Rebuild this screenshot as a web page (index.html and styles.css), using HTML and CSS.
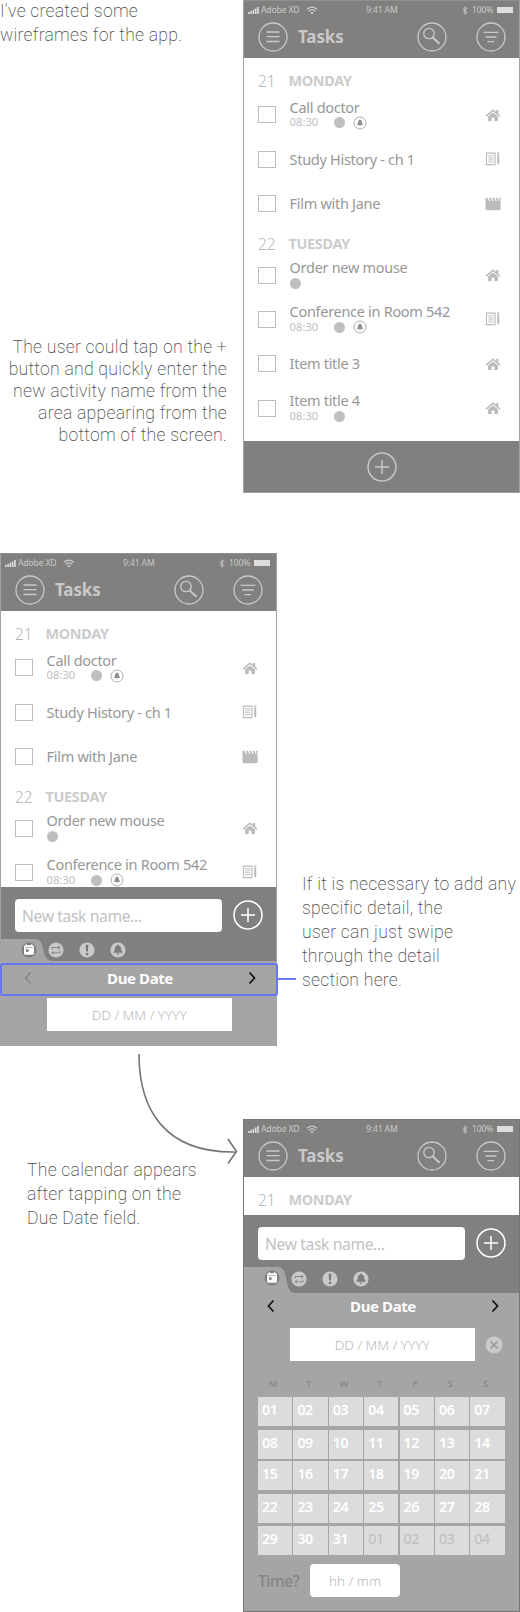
FILE: index.html
```html
<!DOCTYPE html>
<html lang="en">
<head>
<meta charset="utf-8">
<title>Tasks wireframes</title>
<link rel="stylesheet" href="styles.css">
</head>
<body>
<svg class="defs" width="0" height="0" aria-hidden="true">
  <symbol id="signal" viewBox="0 0 11 7"><path d="M0 5h1.6v2H0zM2.3 4h1.6v3H2.3zM4.6 2.8h1.6V7H4.6zM6.9 1.5h1.6V7H6.9zM9.2 0h1.6v7H9.2z" fill="currentColor"/></symbol>
  <symbol id="wifi" viewBox="0 0 12 9"><path d="M1 3.2Q6-1 11 3.2M2.8 5.2Q6 2.6 9.2 5.2" fill="none" stroke="currentColor" stroke-width="1.3"/><path d="M4.2 6.6Q6 5.4 7.800 6.600L6 8.500z" fill="currentColor"/></symbol>
  <symbol id="bluetooth" viewBox="0 0 6 9"><path d="M.8 2.500l4 4L3 8.300V.7l1.800 1.800-4 4" fill="none" stroke="currentColor" stroke-width="1"/></symbol>
  <symbol id="menu" viewBox="0 0 30 30"><g fill="none" stroke="currentColor" stroke-width="1.300"><circle cx="15" cy="15" r="14"/><path d="M8.500 10h13M8.500 14.700h13M8.500 19.500h13"/></g></symbol>
  <symbol id="search" viewBox="0 0 30 30"><g fill="none" stroke="currentColor" stroke-width="1.300"><circle cx="15" cy="15" r="14"/><circle cx="12" cy="11.500" r="5.200"/><path d="M15.800 15.500l6.700 6.300" stroke-width="2"/></g></symbol>
  <symbol id="filter" viewBox="0 0 30 30"><g fill="none" stroke="currentColor" stroke-width="1.300"><circle cx="15" cy="15" r="14"/><path d="M7.500 10.300h15M9.500 15h11M11.500 19.600h6.500"/></g></symbol>
  <symbol id="plus" viewBox="0 0 30 30"><g fill="none" stroke="currentColor" stroke-width="1.500"><circle cx="15" cy="15" r="14"/><path d="M8 15h14M15 8v14"/></g></symbol>
  <symbol id="home" viewBox="0 0 16 14"><path d="M8 1.200L.6 7.600l1 1.100L8 3.300l6.400 5.400 1-1.100-2.100-1.900V1.700h-2v2.200z" fill="currentColor"/><path d="M8 4.500l-4.900 4.100V13h3.500V9.500h2.800V13h3.500V8.600z" fill="currentColor"/></symbol>
  <symbol id="notes" viewBox="0 0 16 15"><path d="M1 1.200h9.200v12.300H1z" fill="none" stroke="currentColor" stroke-width="1.200"/><path d="M3 4h5.500M3 6.200h5.500M3 8.400h5.500M3 10.600h5.500" stroke="currentColor" stroke-width="1"/><path d="M12.500 .6h2.200v2h-2.200zM12.500 3.300h2.200v8l-1.100 3-1.100-3z" fill="currentColor"/></symbol>
  <symbol id="film" viewBox="0 0 17 14"><path d="M.5 .7L2.700.3 4.200 3.900h1.200L4.100.3h2L7.600 3.900h1.300L7.600.3h2l1.500 3.600h1.300L11.100.3h2l1.500 3.600h.9L14.600.3h2V12q0 1.700-1.700 1.700H2.200Q.5 13.700.5 12z" fill="currentColor"/></symbol>
  <symbol id="bellring" viewBox="0 0 14 14"><circle cx="7" cy="7" r="6" fill="none" stroke="currentColor" stroke-width="1"/><path d="M7 3.400Q5 4 5 6.500L4 9h6L9 6.500Q9 4 7 3.400zM6.200 9.400h1.600L7 10.400z" fill="#8e8e8e"/></symbol>
  <symbol id="calendar" viewBox="0 0 16 16"><circle cx="8" cy="8" r="7.500" fill="#7f7e7d"/><path d="M4.600 3.300V2.200h1.500v1.100h3.800V2.200h1.500v1.100q1.600 0 1.600 1.500v6.500q0 1.500-1.500 1.500h-7Q3 12.800 3 11.300V4.800q0-1.500 1.600-1.500z" fill="#fff"/><path d="M4.200 5.600h7.600" stroke="#8a8a8a" stroke-width=".7"/><path d="M5 7.300h2.600v2.500H5z" fill="#777"/></symbol>
  <symbol id="repeat" viewBox="0 0 16 16"><circle cx="8" cy="8" r="7.600" fill="#c9c9c9"/><path d="M4 7.600V5.500h6.800M12 8.400v2.300H5.200" fill="none" stroke="#8a8a8a" stroke-width="1.100"/><path d="M10.200 3.500l2.600 2-2.600 2zM5.800 8.700l-2.600 2 2.600 2z" fill="#8a8a8a"/></symbol>
  <symbol id="alert" viewBox="0 0 16 16"><circle cx="8" cy="8" r="7.600" fill="#c9c9c9"/><path d="M6.700 2.700h2.600L8.900 9.500H7.100z" fill="#777"/><circle cx="8" cy="12" r="1.300" fill="#777"/></symbol>
  <symbol id="bell" viewBox="0 0 16 16"><circle cx="8" cy="8" r="7.600" fill="#c9c9c9"/><path d="M8 2.600q-.8 0-.9 1Q4.700 4.300 4.700 8L3.200 10.800h9.600L11.300 8q0-3.700-2.400-4.400-.1-1-.9-1zM6.500 11.500h3q-.3 1.300-1.500 1.300t-1.500-1.300z" fill="#7c7c7c"/></symbol>
  <symbol id="left" viewBox="0 0 10 14"><path d="M7.500 1.500L2.500 7l5 5.500" fill="none" stroke="currentColor" stroke-width="1.700"/></symbol>
  <symbol id="right" viewBox="0 0 10 14"><path d="M2.500 1.500l5 5.500-5 5.500" fill="none" stroke="currentColor" stroke-width="1.700"/></symbol>
  <symbol id="clear" viewBox="0 0 18 18"><circle cx="9" cy="9" r="8.500" fill="#c9c9c9"/><path d="M5.500 5.500l7 7M12.500 5.500l-7 7" stroke="#999" stroke-width="1.700"/></symbol>
</svg>

<main class="board">
  <section class="scene scene-list">
    <div class="side">
      <p class="note note-intro">I've created some<br>wireframes for the app.</p>
      <p class="note note-right">The user could tap on the +<br>button and quickly enter the<br>new activity name from the<br>area appearing from the<br>bottom of the screen.</p>
    </div>
    <div class="phone">
      <header class="top">
        <div class="status"><svg class="i-signal"><use href="#signal"/></svg><span class="carrier">Adobe XD</span><svg class="i-wifi"><use href="#wifi"/></svg><span class="clock">9:41 AM</span><svg class="i-bt"><use href="#bluetooth"/></svg><span class="charge">100%</span><i class="battery"></i></div>
        <div class="nav"><svg class="round"><use href="#menu"/></svg><h1>Tasks</h1><svg class="round"><use href="#search"/></svg><svg class="round last"><use href="#filter"/></svg></div>
      </header>
      <div class="list">
        <h2 class="day"><span>21</span><b>MONDAY</b></h2>
        <div class="task"><i class="box"></i><div class="body"><p>Call doctor</p><div class="meta"><time>08:30</time><i class="dot"></i><svg class="ring"><use href="#bellring"/></svg></div></div><svg class="kind"><use href="#home"/></svg></div>
        <div class="task"><i class="box"></i><div class="body"><p>Study History - ch 1</p></div><svg class="kind"><use href="#notes"/></svg></div>
        <div class="task"><i class="box"></i><div class="body"><p>Film with Jane</p></div><svg class="kind"><use href="#film"/></svg></div>
        <h2 class="day later"><span>22</span><b>TUESDAY</b></h2>
        <div class="task"><i class="box"></i><div class="body"><p>Order new mouse</p><div class="meta"><i class="dot"></i></div></div><svg class="kind"><use href="#home"/></svg></div>
        <div class="task"><i class="box"></i><div class="body"><p>Conference in Room 542</p><div class="meta"><time>08:30</time><i class="dot"></i><svg class="ring"><use href="#bellring"/></svg></div></div><svg class="kind"><use href="#notes"/></svg></div>
        <div class="task"><i class="box"></i><div class="body"><p>Item title 3</p></div><svg class="kind"><use href="#home"/></svg></div>
        <div class="task"><i class="box"></i><div class="body"><p>Item title 4</p><div class="meta"><time>08:30</time><i class="dot"></i></div></div><svg class="kind"><use href="#home"/></svg></div>
      </div>
      <footer class="bar"><svg class="round"><use href="#plus"/></svg></footer>
    </div>
  </section>

  <section class="scene scene-add">
    <div class="phone">
      <header class="top">
        <div class="status"><svg class="i-signal"><use href="#signal"/></svg><span class="carrier">Adobe XD</span><svg class="i-wifi"><use href="#wifi"/></svg><span class="clock">9:41 AM</span><svg class="i-bt"><use href="#bluetooth"/></svg><span class="charge">100%</span><i class="battery"></i></div>
        <div class="nav"><svg class="round"><use href="#menu"/></svg><h1>Tasks</h1><svg class="round"><use href="#search"/></svg><svg class="round last"><use href="#filter"/></svg></div>
      </header>
      <div class="list">
        <h2 class="day"><span>21</span><b>MONDAY</b></h2>
        <div class="task"><i class="box"></i><div class="body"><p>Call doctor</p><div class="meta"><time>08:30</time><i class="dot"></i><svg class="ring"><use href="#bellring"/></svg></div></div><svg class="kind"><use href="#home"/></svg></div>
        <div class="task"><i class="box"></i><div class="body"><p>Study History - ch 1</p></div><svg class="kind"><use href="#notes"/></svg></div>
        <div class="task"><i class="box"></i><div class="body"><p>Film with Jane</p></div><svg class="kind"><use href="#film"/></svg></div>
        <h2 class="day later"><span>22</span><b>TUESDAY</b></h2>
        <div class="task"><i class="box"></i><div class="body"><p>Order new mouse</p><div class="meta"><i class="dot"></i></div></div><svg class="kind"><use href="#home"/></svg></div>
        <div class="task"><i class="box"></i><div class="body"><p>Conference in Room 542</p><div class="meta"><time>08:30</time><i class="dot"></i><svg class="ring"><use href="#bellring"/></svg></div></div><svg class="kind"><use href="#notes"/></svg></div>
      </div>
      <div class="entry">
        <div class="new"><span class="field name">New task name...</span><svg class="round"><use href="#plus"/></svg></div>
        <div class="tabs"><svg class="tab" viewBox="0 0 52 22" preserveAspectRatio="none"><path d="M0 0H34Q40 0 42 6L44 14Q46 22 52 22H0z" fill="#a5a5a5"/></svg><svg class="chip first"><use href="#calendar"/></svg><svg class="chip"><use href="#repeat"/></svg><svg class="chip"><use href="#alert"/></svg><svg class="chip"><use href="#bell"/></svg></div>
      </div>
      <div class="detail">
        <div class="pager"><svg class="chev off"><use href="#left"/></svg><h3>Due Date</h3><svg class="chev"><use href="#right"/></svg><i class="focus"></i></div>
        <div class="date"><span class="field">DD / MM / YYYY</span></div>
      </div>
    </div>
    <i class="lead"></i>
    <p class="note note-detail">If it is necessary to add any<br>specific detail, the<br>user can just swipe<br>through the detail<br>section here.</p>
  </section>

  <section class="scene scene-calendar">
    <svg class="arrow" viewBox="0 0 110 125"><g fill="none" stroke="#757575" stroke-width="1.600"><path d="M6 4C6 60 32 103 102 102"/><path d="M95 89l8.500 12.500L95 113.500"/></g></svg>
    <p class="note note-calendar">The calendar appears<br>after tapping on the<br>Due Date field.</p>
    <div class="phone strong">
      <header class="top">
        <div class="status"><svg class="i-signal"><use href="#signal"/></svg><span class="carrier">Adobe XD</span><svg class="i-wifi"><use href="#wifi"/></svg><span class="clock">9:41 AM</span><svg class="i-bt"><use href="#bluetooth"/></svg><span class="charge">100%</span><i class="battery"></i></div>
        <div class="nav"><svg class="round"><use href="#menu"/></svg><h1>Tasks</h1><svg class="round"><use href="#search"/></svg><svg class="round last"><use href="#filter"/></svg></div>
      </header>
      <div class="list">
        <h2 class="day"><span>21</span><b>MONDAY</b></h2>
      </div>
      <div class="entry">
        <div class="new"><span class="field name">New task name...</span><svg class="round"><use href="#plus"/></svg></div>
        <div class="tabs"><svg class="tab" viewBox="0 0 52 22" preserveAspectRatio="none"><path d="M0 0H34Q40 0 42 6L44 14Q46 22 52 22H0z" fill="#a5a5a5"/></svg><svg class="chip first"><use href="#calendar"/></svg><svg class="chip"><use href="#repeat"/></svg><svg class="chip"><use href="#alert"/></svg><svg class="chip"><use href="#bell"/></svg></div>
      </div>
      <div class="detail">
        <div class="pager"><svg class="chev"><use href="#left"/></svg><h3>Due Date</h3><svg class="chev"><use href="#right"/></svg></div>
        <div class="date"><span class="field">DD / MM / YYYY</span><svg class="clear"><use href="#clear"/></svg></div>
        <div class="week"><span>M</span><span>T</span><span>W</span><span>T</span><span>F</span><span>S</span><span>S</span></div>
        <div class="month">
          <span>01</span><span>02</span><span>03</span><span>04</span><span>05</span><span>06</span><span>07</span>
          <span>08</span><span>09</span><span>10</span><span>11</span><span>12</span><span>13</span><span>14</span>
          <span>15</span><span>16</span><span>17</span><span>18</span><span>19</span><span>20</span><span>21</span>
          <span>22</span><span>23</span><span>24</span><span>25</span><span>26</span><span>27</span><span>28</span>
          <span>29</span><span>30</span><span>31</span><span class="out">01</span><span class="out">02</span><span class="out">03</span><span class="out">04</span>
        </div>
        <div class="hour"><label>Time?</label><span class="field">hh / mm</span></div>
      </div>
    </div>
  </section>
</main>
</body>
</html>
```

FILE: styles.css
```css
* { box-sizing: border-box; }
body { margin: 0; background: #fff; font-family: "Noto Sans", sans-serif; }
h1, h2, h3, p { margin: 0; font-weight: 400; }
svg { display: block; flex: none; overflow: visible; }
i { display: block; flex: none; }
.defs { position: absolute; }
.board { width: 520px; height: 1612px; overflow: hidden; }

.scene { display: flex; height: 493px; }
.scene-add { margin-top: 60px; }
.scene-calendar { margin-top: 73px; position: relative; }

/* Annotations */
.note { font-family: Roboto, sans-serif; font-weight: 200; font-size: 17.6px; line-height: 24px; color: #4c4c4c; white-space: nowrap; letter-spacing: .25px; }
.side { width: 243px; display: flex; flex-direction: column; justify-content: space-between; padding: 0 16px 47px 0; }
.note-intro { margin-top: -1px; }
.note-right { text-align: right; line-height: 22px; }
.lead { width: 19px; height: 2px; margin: 425px 6px 0 0; background: #6b78f0; }
.note-detail { padding-top: 319px; }
.note-calendar { width: 243px; padding: 39px 0 0 27px; }
.arrow { position: absolute; left: 133px; top: -69px; width: 110px; height: 125px; }

/* Phone frame */
.phone { width: 277px; height: 493px; flex: none; border: 1px solid #a3a3a3; border-top-color: #8f8f8f; display: flex; flex-direction: column; overflow: hidden; background: #fff; }
.scene-add .phone { overflow: visible; }
.phone.strong { border-color: #767676; }
.top { height: 57px; flex: none; background: #81807e; color: #c9c9c9; }
.status { height: 18px; display: flex; align-items: center; padding-left: 4px; font-size: 8.6px; letter-spacing: -.15px; }
.i-signal { width: 11px; height: 7px; margin-right: 2px; color: #ddd; }
.carrier { width: 39px; white-space: nowrap; }
.i-wifi { width: 12px; height: 9px; margin: 0 0 0 6px; }
.clock { width: 31px; margin-left: 48px; white-space: nowrap; }
.i-bt { width: 6px; height: 9px; margin-left: 65px; }
.charge { width: 22px; margin-left: 4px; white-space: nowrap; }
.battery { width: 16px; height: 6px; margin-left: 3px; background: #ddd; }
.nav { display: flex; align-items: center; height: 36px; padding: 0 0 0 13.5px; }
.round { width: 30px; height: 30px; }
.nav h1 { width: 129px; padding-left: 10.5px; font-size: 17px; font-weight: 700; line-height: 24px; margin-top: -1px; letter-spacing: -.1px; }
.nav .last { margin-left: 29px; }

/* Task list */
.list { flex: 1; min-height: 0; padding-top: 12px; overflow: hidden; }
.day { display: flex; align-items: center; height: 22.8px; padding-left: 14px; color: #cbcbcb; font-size: 15.5px; line-height: 18px; }
.day span { width: 30.5px; font-weight: 300; color: #b4b4b4; }
.day b { font-weight: 700; font-size: 14.4px; letter-spacing: -.3px; }
.day.later { height: 18.6px; margin-top: 8.7px; }
.task { display: flex; align-items: center; height: 44.3px; padding: 0 18.5px 0 14px; }
.box { width: 18px; height: 17px; border: 1.3px solid #bcbcbc; }
.body { flex: 1; padding-left: 13.6px; }
.body p { font-size: 14.5px; line-height: 17px; color: #979797; letter-spacing: -.3px; white-space: nowrap; }
.body p:not(:last-child) { margin-top: -2px; padding-bottom: 1px; }
.meta { display: flex; align-items: center; height: 12px; }
.meta time { width: 44px; font-size: 11.2px; line-height: 12px; color: #c0c0c0; margin-top: -1px; }
.dot { width: 11px; height: 11px; border-radius: 50%; background: #bfbfbf; }
.ring { width: 14px; height: 14px; margin-left: 8px; color: #adadad; }
.kind { width: 16px; height: 14px; color: #bbb; }
.bar { height: 51px; flex: none; display: flex; justify-content: center; align-items: center; background: #81807e; color: #c6c6c6; }

/* New task entry */
.entry { height: 74px; flex: none; background: #81807e; }
.new { display: flex; align-items: center; gap: 10.5px; padding: 12px 0 0 14px; height: 45px; color: #fff; }
.new .round { margin-top: -1px; }
.field { display: flex; align-items: center; justify-content: center; height: 33px; background: #fff; color: #b8b8b8; font-size: 13.5px; font-weight: 300; white-space: nowrap; }
.name { width: 207px; justify-content: flex-start; padding-left: 7px; border-radius: 4px; font-size: 15.7px; font-weight: 400; color: #c2c2c2; letter-spacing: -.4px; }
.tabs { position: relative; display: flex; gap: 15px; margin-top: 7px; height: 22px; padding: 3px 0 0 20px; }
.tab { position: absolute; left: 0; top: 0; width: 51px; height: 100%; }
.chip { position: relative; width: 16px; height: 16px; }
.chip.first { margin-right: -4px; }

/* Detail section */
.detail { height: 84px; flex: none; background: #a5a5a5; color: #fff; }
.pager { position: relative; display: flex; align-items: center; justify-content: space-between; height: 33px; margin-top: 2px; padding: 0 19px 4px 22px; }
.pager h3 { font-size: 15px; font-weight: 700; line-height: 20px; letter-spacing: -.4px; }
.chev { width: 10px; height: 14px; color: #111; }
.chev.off { color: #858585; }
.focus { position: absolute; left: -1px; top: 0; width: 278px; height: 33px; border: 2px solid #6776f0; border-radius: 3px; }
.date { display: flex; align-items: center; padding: 2px 0 0 46px; }
.date .field { width: 184.5px; }

.strong .list { flex: none; height: 38px; }
.strong .entry { height: 78px; }
.strong .tabs { height: 26px; padding-top: 4px; }
.strong .chip.first { margin-top: -1px; }
.strong .detail { height: 318px; }
.strong .pager { height: 24px; padding-bottom: 2px; }
.strong .date { padding-top: 9px; }
.clear { width: 18px; height: 18px; margin-left: 10px; }
.week, .month { display: grid; grid-template-columns: repeat(7, 35.4px); margin-left: 14px; }
.week { margin-top: 16px; height: 20px; line-height: 14px; font-size: 9.5px; font-weight: 600; color: #8b8b8b; text-align: center; }
.week span { padding-right: 5px; }
.month { grid-template-rows: 33px 31px 33px 32px 29px; }
.month span { width: 34.2px; height: 29px; padding-left: 4px; background: #dcdcdc; font-size: 14.2px; font-weight: 600; line-height: 25px; letter-spacing: -.4px; }
.month .out { color: #bdbdbd; font-weight: 400; }
.hour { display: flex; align-items: center; margin: 9px 0 0 14px; }
.hour label { width: 52px; font-size: 15.5px; font-weight: 500; color: #858585; letter-spacing: -.4px; }
.hour .field { width: 90px; border-radius: 4px; }
```
